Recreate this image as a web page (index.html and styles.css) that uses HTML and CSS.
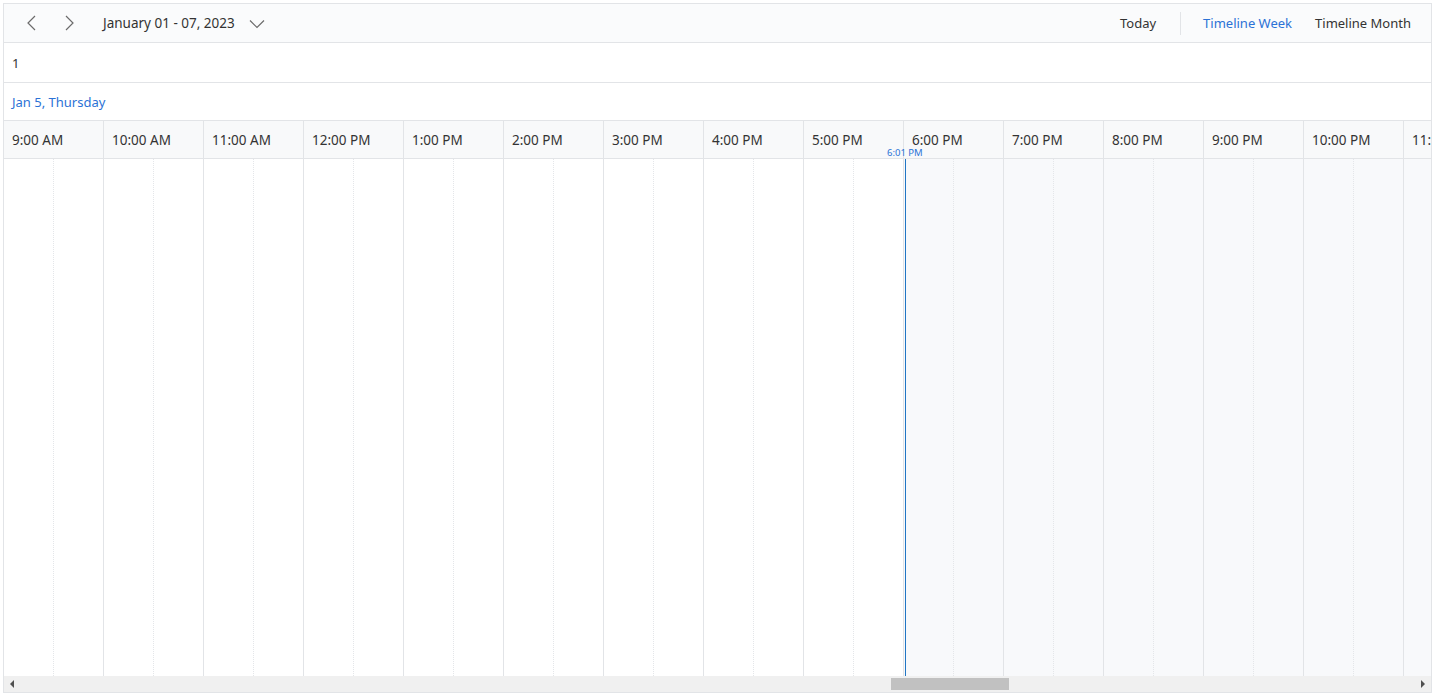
FILE: index.html
```html
<!DOCTYPE html>
<html>

<head>
	<meta charset="UTF-8">
	<meta name="viewport" content="width=device-width, initial-scale=1.0">
	<title>Scheduler</title>
	<link rel="stylesheet" href="styles.css">
</head>

<body>
	<div class="scheduler">
		<div class="toolbar">
			<div class="toolbar-left">
				<button class="nav-btn" title="Previous">
					<svg width="16" height="16" viewBox="0 0 16 16"><polyline points="11,1 4,8 11,15" fill="none" stroke="#6b6b6b" stroke-width="1.2"/></svg>
				</button>
				<button class="nav-btn" title="Next">
					<svg width="16" height="16" viewBox="0 0 16 16"><polyline points="5,1 12,8 5,15" fill="none" stroke="#6b6b6b" stroke-width="1.2"/></svg>
				</button>
				<button class="date-range">
					<span>January 01 - 07, 2023</span>
					<svg width="16" height="10" viewBox="0 0 16 10"><polyline points="1,1.5 8,8.5 15,1.5" fill="none" stroke="#6b6b6b" stroke-width="1.2"/></svg>
				</button>
			</div>
			<div class="toolbar-right">
				<button class="view-btn">Today</button>
				<span class="separator"></span>
				<button class="view-btn active">Timeline Week</button>
				<button class="view-btn">Timeline Month</button>
			</div>
		</div>

		<div class="resource-row">1</div>
		<div class="date-row">Jan 5, Thursday</div>

		<div class="timeline">
			<div class="time-header" id="header"></div>
			<div class="time-body" id="body"></div>
			<div class="now-line">
				<span class="now-label">6:01 PM</span>
			</div>
		</div>

		<div class="hscroll">
			<span class="arrow arrow-left"></span>
			<div class="track">
				<div class="thumb"></div>
			</div>
			<span class="arrow arrow-right"></span>
		</div>
	</div>

	<script>
		const hours = ['9:00 AM', '10:00 AM', '11:00 AM', '12:00 PM', '1:00 PM', '2:00 PM', '3:00 PM',
			'4:00 PM', '5:00 PM', '6:00 PM', '7:00 PM', '8:00 PM', '9:00 PM', '10:00 PM', '11:00 PM'];
		const header = document.getElementById('header');
		const body = document.getElementById('body');

		hours.forEach(function (h, i) {
			const cell = document.createElement('div');
			cell.className = 'hour-cell';
			cell.textContent = h;
			header.appendChild(cell);

			const slot = document.createElement('div');
			slot.className = 'slot' + (i >= 9 ? ' future' : '');
			slot.innerHTML = '<div class="half"></div><div class="half"></div>';
			body.appendChild(slot);
		});
	</script>

</body>

</html>
```

FILE: styles.css
```css
html {
	box-sizing: border-box;
	font-size: 14px;
}

*,
*:before,
*:after {
	box-sizing: inherit;
}

body {
	margin: 0;
	padding: 3px 2px 2px 3px;
	background: #fff;
	color: #333;
	font-family: "Noto Sans", "Open Sans", sans-serif;
	font-size: 14px;
}

:root {
	--border: #e2e4e7;
	--blue: #2b72d6;
	--header-bg: #f8f9fa;
}

button {
	border: none;
	background: none;
	font: inherit;
	color: inherit;
	cursor: pointer;
	padding: 0;
}

.scheduler {
	height: 690px;
	border: 1px solid var(--border);
	display: flex;
	flex-direction: column;
	overflow: hidden;
}

.toolbar {
	height: 39px;
	flex: none;
	display: flex;
	align-items: center;
	justify-content: space-between;
	background: #fafbfc;
	border-bottom: 1px solid var(--border);
}

.toolbar-left {
	display: flex;
	align-items: center;
	padding-left: 16px;
}

.nav-btn {
	width: 24px;
	height: 28px;
	display: flex;
	align-items: center;
	justify-content: center;
	margin-right: 13px;
}

.date-range {
	display: flex;
	align-items: center;
	gap: 14px;
	margin-left: 9px;
	color: #333;
	font-size: 13.5px;
}

.date-range svg {
	margin-top: 1px;
}

.toolbar-right {
	display: flex;
	align-items: center;
	padding-right: 20px;
}

.view-btn {
	font-size: 13px;
	color: #333;
}

.view-btn.active {
	color: var(--blue);
	margin-right: 23px;
}

.separator {
	width: 1px;
	height: 23px;
	background: var(--border);
	margin: 0 22px 0 24px;
}

.resource-row {
	height: 40px;
	flex: none;
	display: flex;
	align-items: center;
	padding-left: 8px;
	font-size: 13px;
	border-bottom: 1px solid var(--border);
}

.date-row {
	height: 38px;
	flex: none;
	display: flex;
	align-items: center;
	padding-left: 8px;
	font-size: 13px;
	color: var(--blue);
	border-bottom: 1px solid var(--border);
}

.timeline {
	position: relative;
	flex: 1;
	display: flex;
	flex-direction: column;
	overflow: hidden;
}

.time-header {
	height: 38px;
	flex: none;
	display: flex;
	background: var(--header-bg);
	border-bottom: 1px solid var(--border);
}

.hour-cell {
	flex: none;
	width: 100px;
	display: flex;
	align-items: center;
	padding-left: 8px;
	font-size: 13.5px;
	color: #333;
	border-right: 1px solid var(--border);
	white-space: nowrap;
}

.time-body {
	flex: 1;
	display: flex;
}

.slot {
	flex: none;
	width: 100px;
	display: flex;
	border-right: 1px solid var(--border);
}

.slot.future {
	background: #f8f9fb;
}

.half {
	flex: 1;
}

.half:first-child {
	border-right: 1px dotted #e4e6e9;
}

.now-line {
	position: absolute;
	top: 38px;
	bottom: 0;
	left: 901px;
	width: 1px;
	background: #2176c4;
}

.now-label {
	position: absolute;
	bottom: 100%;
	left: -18px;
	margin-bottom: 1px;
	font-size: 9.5px;
	line-height: 10px;
	color: var(--blue);
	white-space: nowrap;
}

.hscroll {
	height: 16px;
	flex: none;
	display: flex;
	align-items: center;
	background: #f0f0f0;
}

.arrow {
	width: 16px;
	height: 16px;
	flex: none;
	display: flex;
	align-items: center;
	justify-content: center;
}

.arrow-left:before {
	content: "";
	border-top: 4px solid transparent;
	border-bottom: 4px solid transparent;
	border-right: 4px solid #505050;
}

.arrow-right:before {
	content: "";
	border-top: 4px solid transparent;
	border-bottom: 4px solid transparent;
	border-left: 4px solid #505050;
}

.track {
	flex: 1;
	height: 100%;
	display: flex;
	align-items: center;
}

.thumb {
	width: 118px;
	height: 12px;
	margin-left: 871px;
	background: #c1c1c1;
}
```
